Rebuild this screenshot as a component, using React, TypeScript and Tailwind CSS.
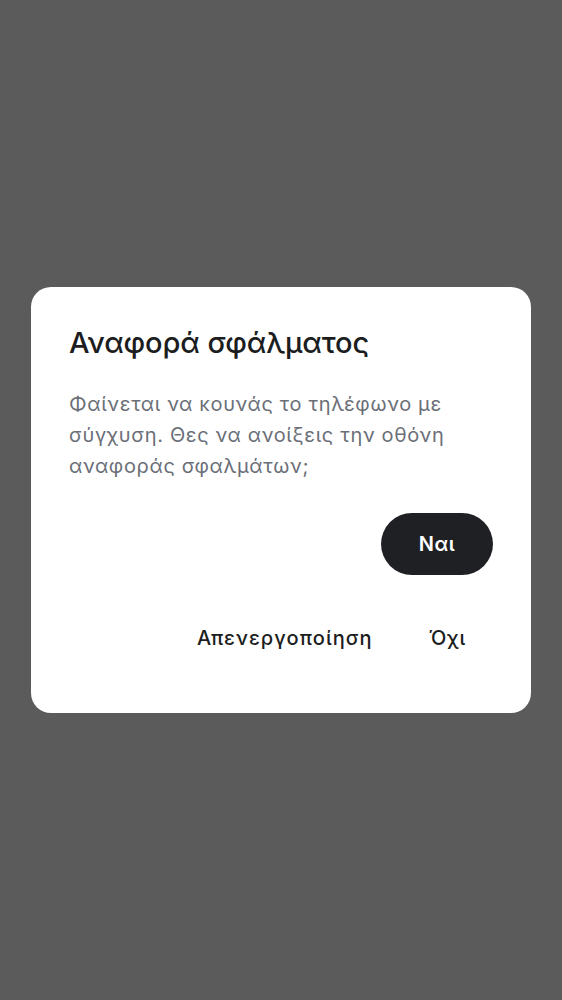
export default function App() {
  return (
    <div
      className="w-[562px] h-[1000px] bg-[#5b5b5b] flex items-center justify-center"
      style={{ fontFamily: "Inter, 'Noto Sans', sans-serif" }}
    >
      <div className="w-[500px] h-[426px] bg-white rounded-[20px] pl-[38px] pr-[38px] pt-[38px] flex flex-col">
        <h1 className="text-[29px] leading-[36px] font-medium text-[#1c1d20] tracking-[-0.1px]">Αναφορά σφάλματος</h1>
        <p className="mt-[28px] text-[20px] leading-[31px] text-[#6b6f78] tracking-[0.65px]">
          Φαίνεται να κουνάς το τηλέφωνο με σύγχυση. Θες να ανοίξεις την οθόνη αναφοράς σφαλμάτων;
        </p>
        <div className="mt-[31px] flex justify-end">
          <button className="w-[112px] h-[62px] rounded-full bg-[#1f2023] text-white text-[20px] font-semibold tracking-[0.5px]">Ναι</button>
        </div>
        <div className="mt-[48px] flex justify-end items-center gap-[56px] pr-[27px]">
          <span className="text-[20px] font-medium text-[#1c1d20] tracking-[1px]">Απενεργοποίηση</span>
          <span className="text-[20px] font-medium text-[#1c1d20] tracking-[0.8px]">Όχι</span>
        </div>
      </div>
    </div>
  );
}
